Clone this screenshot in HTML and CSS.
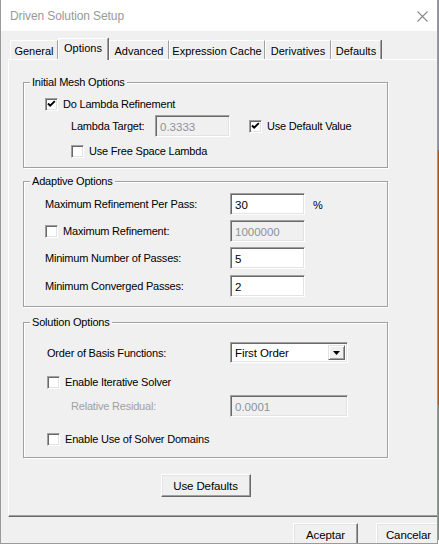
FILE: index.html
```html
<!DOCTYPE html>
<html>
<head>
<meta charset="utf-8">
<link rel="stylesheet" href="styles.css">
</head>
<body>
<div class="window">
  <div class="titlebar">
    <span class="title">Driven Solution Setup</span>
    <svg class="close" width="11" height="11" viewBox="0 0 11 11"><path d="M0.5 0.5L10.5 10.5M10.5 0.5L0.5 10.5" stroke="#8a8a8a" stroke-width="1.1" fill="none"/></svg>
  </div>
  <div class="tabs">
    <div class="tab w-general">General</div>
    <div class="tab active w-options">Options</div>
    <div class="tab w-advanced">Advanced</div>
    <div class="tab w-cache">Expression Cache</div>
    <div class="tab w-deriv">Derivatives</div>
    <div class="tab w-defaults">Defaults</div>
  </div>
  <div class="page">
    <div class="content">
      <div class="group g1">
        <span class="gtitle">Initial Mesh Options</span>
        <div class="row ind21">
          <span class="cb"><svg width="9" height="9" viewBox="0 0 9 9"><path d="M1 3.5L3.2 5.7L7.8 1.1" stroke="#000" stroke-width="2" fill="none"/></svg></span>
          <span class="cbtext">Do Lambda Refinement</span>
        </div>
        <div class="row ind47">
          <span class="lbl lbl-lambda">Lambda Target:</span>
          <span class="input disabled w74">0.3333</span>
          <span class="cb ml19"><svg width="9" height="9" viewBox="0 0 9 9"><path d="M1 3.5L3.2 5.7L7.8 1.1" stroke="#000" stroke-width="2" fill="none"/></svg></span>
          <span class="cbtext">Use Default Value</span>
        </div>
        <div class="row r1-3 ind47">
          <span class="cb"></span>
          <span class="cbtext">Use Free Space Lambda</span>
        </div>
      </div>

      <div class="group g2">
        <span class="gtitle">Adaptive Options</span>
        <div class="row ind21">
          <span class="lbl w185">Maximum Refinement Per Pass:</span>
          <span class="input w74">30</span>
          <span class="pct">%</span>
        </div>
        <div class="row r2-n ind21">
          <span class="lbl w185 cbrow"><span class="cb"></span><span class="cbtext">Maximum Refinement:</span></span>
          <span class="input disabled w74">1000000</span>
        </div>
        <div class="row r2-n ind21">
          <span class="lbl w185">Minimum Number of Passes:</span>
          <span class="input w74">5</span>
        </div>
        <div class="row r2-4 ind21">
          <span class="lbl w185">Minimum Converged Passes:</span>
          <span class="input w74">2</span>
        </div>
      </div>

      <div class="group g3">
        <span class="gtitle">Solution Options</span>
        <div class="row r3-1 ind23">
          <span class="lbl w183">Order of Basis Functions:</span>
          <span class="select">
            <span class="seltext">First Order</span>
            <span class="selbtn"><svg width="7" height="4" viewBox="0 0 7 4"><path d="M0 0H7L3.5 4Z" fill="#000"/></svg></span>
          </span>
        </div>
        <div class="row r3-2 ind23">
          <span class="cb"></span>
          <span class="cbtext">Enable Iterative Solver</span>
        </div>
        <div class="row r3-3 ind47">
          <span class="lbl lbl-dis w159">Relative Residual:</span>
          <span class="input disabled w118">0.0001</span>
        </div>
        <div class="row r3-4 ind23">
          <span class="cb"></span>
          <span class="cbtext">Enable Use of Solver Domains</span>
        </div>
      </div>

      <div class="btnrow">
        <span class="button w90">Use Defaults</span>
      </div>
    </div>
  </div>
  <div class="footer">
    <span class="button w64 tall">Aceptar</span>
    <span class="button w64 tall">Cancelar</span>
  </div>
</div>
</body>
</html>
```

FILE: styles.css
```css
html, body {
  margin: 0;
  padding: 0;
}
body {
  width: 439px;
  height: 547px;
  overflow: hidden;
  font-family: "Liberation Sans", Arial, sans-serif;
  font-size: 11px;
  letter-spacing: -0.2px;
  color: #000;
  background: linear-gradient(to bottom, #8f8f9c 0px, #8f8f9c 150px, #a45a25 150px, #a45a25 405px, #7f8a80 405px, #7f8a80 540px, #ffffff 540px);
}
.window {
  box-sizing: border-box;
  width: 438px;
  height: 544px;
  background: #f0f0f0;
  border-left: 1px solid #9a9a9a;
  border-right: 1px solid #9a9a9a;
  border-bottom: 1px solid #9a9a9a;
  overflow: hidden;
  display: flex;
  flex-direction: column;
}
.titlebar {
  height: 31px;
  flex: none;
  background: #fff;
  display: flex;
  align-items: center;
  justify-content: space-between;
  padding-left: 9px;
  padding-right: 9px;
}
.title {
  font-size: 12px;
  color: #999;
  letter-spacing: -0.1px;
}
.close {
  margin-top: 1px;
}
.tabs {
  display: flex;
  align-items: flex-end;
  height: 21px;
  margin-top: 7px;
  padding-left: 9px;
  flex: none;
  position: relative;
  z-index: 2;
}
.tab {
  box-sizing: border-box;
  height: 19px;
  border-top: 1px solid #fff;
  border-left: 1px solid #fff;
  border-right: 1px solid #a0a0a0;
  box-shadow: 1px 0 0 #696969;
  font-size: 11px;
  letter-spacing: 0;
  white-space: nowrap;
  display: flex;
  align-items: center;
  justify-content: center;
  padding-top: 1px;
}
.tab.active {
  height: 22px;
  margin-bottom: -1px;
  background: #f0f0f0;
  padding-top: 0;
  padding-bottom: 3px;
}
.w-general { width: 48px; }
.w-options { width: 50px; }
.w-advanced { width: 60px; margin-left: 1px; }
.w-cache { width: 96px; }
.w-deriv { width: 66px; }
.w-defaults { width: 50px; }

.page {
  box-sizing: border-box;
  height: 458px;
  margin-left: 7px;
  border-top: 1px solid #fff;
  border-left: 1px solid #fff;
  border-bottom: 1px solid #696969;
  box-shadow: inset 0 -1px 0 #a0a0a0;
  flex: none;
  padding-left: 14px;
  padding-top: 22px;
}
.content {
  width: 365px;
  display: flex;
  flex-direction: column;
}
.group {
  position: relative;
  box-sizing: border-box;
  width: 365px;
  border: 1px solid #a0a0a0;
  box-shadow: 1px 1px 0 #fff, inset 1px 1px 0 #fff;
  display: flex;
  flex-direction: column;
}
.gtitle {
  position: absolute;
  top: -7px;
  left: 6px;
  padding: 0 2px;
  line-height: 13px;
  background: #f0f0f0;
}
.g1 { padding-top: 10px; padding-bottom: 5px; }
.g2 { margin-top: 13px; padding-top: 11px; padding-bottom: 9px; }
.g3 { margin-top: 15px; padding-top: 19px; padding-bottom: 7px; }

.row {
  display: flex;
  align-items: center;
  height: 22px;
}
.ind21 { padding-left: 21px; }
.ind23 { padding-left: 23px; }
.ind47 { padding-left: 47px; }
.r1-3 { margin-top: 3px; }
.r2-n { margin-top: 5px; }
.r2-4 { margin-top: 6px; }
.r3-1 { height: 21px; }
.r3-2 { margin-top: 8px; }
.r3-3 { margin-top: 2px; }
.r3-4 { margin-top: 11px; }

.lbl { flex: none; }
.lbl-lambda { width: 84px; }
.w185 { width: 185px; }
.w183 { width: 183px; }
.w159 { width: 159px; }
.lbl-dis { color: #a0a0a0; }
.cbrow { display: flex; align-items: center; }

.cb {
  box-sizing: border-box;
  width: 13px;
  height: 13px;
  flex: none;
  background: #fff;
  border: 1px solid;
  border-color: #a0a0a0 #fff #fff #a0a0a0;
  box-shadow: inset 1px 1px 0 #696969, inset -1px -1px 0 #e3e3e3;
  display: flex;
  align-items: center;
  justify-content: center;
}
.cbtext { margin-left: 5px; }
.ml19 { margin-left: 19px; }

.input {
  box-sizing: border-box;
  height: 22px;
  flex: none;
  background: #fff;
  border: 1px solid;
  border-color: #a0a0a0 #fff #fff #a0a0a0;
  box-shadow: inset 1px 1px 0 #696969, inset -1px -1px 0 #e3e3e3;
  padding-left: 4px;
  padding-top: 1px;
  display: flex;
  align-items: center;
  font-size: 11.5px;
  letter-spacing: 0;
}
.input.disabled {
  background: #f0f0f0;
  color: #8c929a;
}
.w74 { width: 75px; }
.w118 { width: 118px; }
.pct { margin-left: 8px; margin-top: 1px; }

.select {
  box-sizing: border-box;
  width: 118px;
  height: 21px;
  flex: none;
  background: #fff;
  border: 1px solid;
  border-color: #a0a0a0 #fff #fff #a0a0a0;
  box-shadow: inset 1px 1px 0 #696969, inset -1px -1px 0 #e3e3e3;
  display: flex;
  align-items: stretch;
  padding: 2px;
}
.seltext {
  flex: 1;
  display: flex;
  align-items: center;
  padding-left: 2px;
  font-size: 11.5px;
  letter-spacing: -0.1px;
}
.selbtn {
  box-sizing: border-box;
  width: 17px;
  background: #f0f0f0;
  border: 1px solid;
  border-color: #e3e3e3 #696969 #696969 #e3e3e3;
  box-shadow: inset 1px 1px 0 #fff, inset -1px -1px 0 #a0a0a0;
  display: flex;
  align-items: center;
  justify-content: center;
}

.btnrow {
  display: flex;
  justify-content: center;
  margin-top: 16px;
}
.button {
  box-sizing: border-box;
  height: 23px;
  background: #f0f0f0;
  border: 1px solid;
  border-color: #fff #696969 #696969 #fff;
  box-shadow: inset -1px -1px 0 #a0a0a0, inset 1px 1px 0 #e3e3e3;
  display: flex;
  align-items: center;
  justify-content: center;
  font-size: 11.5px;
  letter-spacing: -0.1px;
  flex: none;
}
.w90 { width: 90px; }
.w64 { width: 65px; }
.footer {
  display: flex;
  padding-left: 292px;
  gap: 18px;
  margin-top: 6px;
  flex: none;
}
.button.tall { height: 26px; padding-bottom: 3px; }
```
